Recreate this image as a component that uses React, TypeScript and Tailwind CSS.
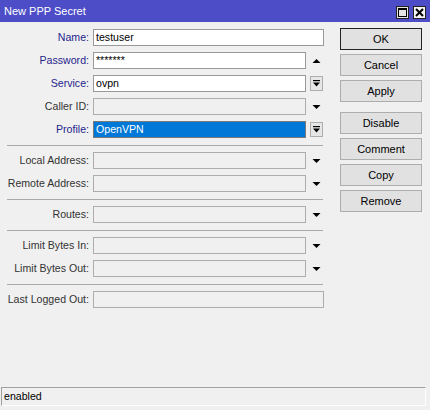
import React from "react";

type Tail = "full" | "up" | "drop" | "down";

interface FieldRow {
  label: string
  value?: string
  accent?: boolean
  enabled?: boolean
  selected?: boolean
  tail: Tail
}

const groups: FieldRow[][] = [
  [
    {label: "Name:", value: "testuser", accent: true, enabled: true, tail: "full"},
    {label: "Password:", value: "*******", accent: true, enabled: true, tail: "up"},
    {label: "Service:", value: "ovpn", accent: true, enabled: true, tail: "drop"},
    {label: "Caller ID:", tail: "down"},
    {label: "Profile:", value: "OpenVPN", accent: true, selected: true, tail: "drop"},
  ],
  [
    {label: "Local Address:", tail: "down"},
    {label: "Remote Address:", tail: "down"},
  ],
  [{label: "Routes:", tail: "down"}],
  [
    {label: "Limit Bytes In:", tail: "down"},
    {label: "Limit Bytes Out:", tail: "down"},
  ],
  [{label: "Last Logged Out:", tail: "full"}],
]

const buttons = [["OK", "Cancel", "Apply"], ["Disable", "Comment", "Copy", "Remove"]]

function UpArrow() {
  return (
    <svg width="9" height="6" viewBox="0 0 9 6"><polygon points="0.5,5 4.5,1 8.5,5" fill="#000"/></svg>
  )
}

function DownArrow() {
  return (
    <svg width="9" height="6" viewBox="0 0 9 6"><polygon points="0.5,1 8.5,1 4.5,5" fill="#000"/></svg>
  )
}

function DropButton() {
  return (
    <div className="w-[13px] h-[15px] border border-[#adadad] bg-[#e6e6e6] flex items-center justify-center">
      <svg width="7" height="7" viewBox="0 0 7 7">
        <rect x="0" y="0" width="7" height="1.2" fill="#000"/>
        <polygon points="0,2.5 7,2.5 3.5,6.5" fill="#000"/>
      </svg>
    </div>
  )
}

function Field({row}: {row: FieldRow}) {
  const box = row.selected
    ? "bg-[#0078d7] text-white border-[#7a7a7a]"
    : row.enabled
      ? "bg-white text-black border-[#999]"
      : "bg-[#f0f0f0] border-[#adadad]"
  const width = row.tail === "full" ? "w-[231px]" : "w-[213px]"

  return (
    <div className="flex items-center h-[17px]">
      <div className={`w-[89px] text-right whitespace-nowrap ${row.accent ? "text-[#25258c]" : "text-[#333]"}`}>
        {row.label}
      </div>
      <div className={`ml-[4px] h-[17px] ${width} border ${box} pl-[2px] flex items-center leading-none`}>
        {row.value}
      </div>
      {row.tail !== "full" && (
        <div className="w-[18px] flex justify-center pl-[2px]">
          {row.tail === "up" && <UpArrow/>}
          {row.tail === "down" && <DownArrow/>}
          {row.tail === "drop" && <DropButton/>}
        </div>
      )}
    </div>
  )
}

export default function App() {
  return (
    <div className="w-[430px] h-[410px] bg-[#f0f0f0] flex flex-col text-[10.6px] text-black" style={{fontFamily: '"Liberation Sans", Arial, sans-serif'}}>
      {/* title bar */}
      <div className="h-[22px] bg-[#4d4dc7] flex items-center pl-[4px] pr-[4px] shrink-0">
        <span className="text-white text-[11px] flex-1">New PPP Secret</span>
        <div className="w-[13px] h-[13px] border border-[#222] bg-[#e4e4e4] flex items-center justify-center mr-[4px] mt-[2px]">
          <svg width="9" height="9" viewBox="0 0 9 9">
            <rect x="0.5" y="0.5" width="8" height="8" fill="none" stroke="#000" strokeWidth="1"/>
            <rect x="0" y="0" width="9" height="2" fill="#000"/>
          </svg>
        </div>
        <div className="w-[13px] h-[13px] border border-[#222] bg-[#f4f4f4] flex items-center justify-center mt-[2px]">
          <svg width="9" height="9" viewBox="0 0 9 9">
            <path d="M1 1 L8 8 M8 1 L1 8" stroke="#000" strokeWidth="2"/>
          </svg>
        </div>
      </div>

      <div className="flex flex-1">
        {/* form */}
        <div className="flex flex-col gap-[6px] pt-[7px]">
          {groups.map((group, gi) => (
            <React.Fragment key={gi}>
              {gi > 0 && <div className="ml-[7px] w-[316px] h-px mt-px bg-[#a9a9a9]"/>}
              {group.map(row => <Field key={row.label} row={row}/>)}
            </React.Fragment>
          ))}
        </div>

        {/* actions */}
        <div className="ml-[16px] w-[82px] pt-[6px] flex flex-col gap-[10px]">
          {buttons.map((set, si) => (
            <div key={si} className="flex flex-col gap-[4px]">
              {set.map(b => (
                <div key={b} className={`h-[22px] flex items-center justify-center bg-[#e1e1e1] border ${b === "OK" ? "border-[#222]" : "border-[#adadad]"} text-[11px]`}>
                  {b}
                </div>
              ))}
            </div>
          ))}
        </div>
      </div>

      {/* status bar */}
      <div className="ml-[1px] mb-[4px] w-[425px] h-[19px] border-t border-l border-[#a0a0a0] border-r border-b border-r-white border-b-white pl-[2px] flex items-center shrink-0">
        enabled
      </div>
    </div>
  )
}
